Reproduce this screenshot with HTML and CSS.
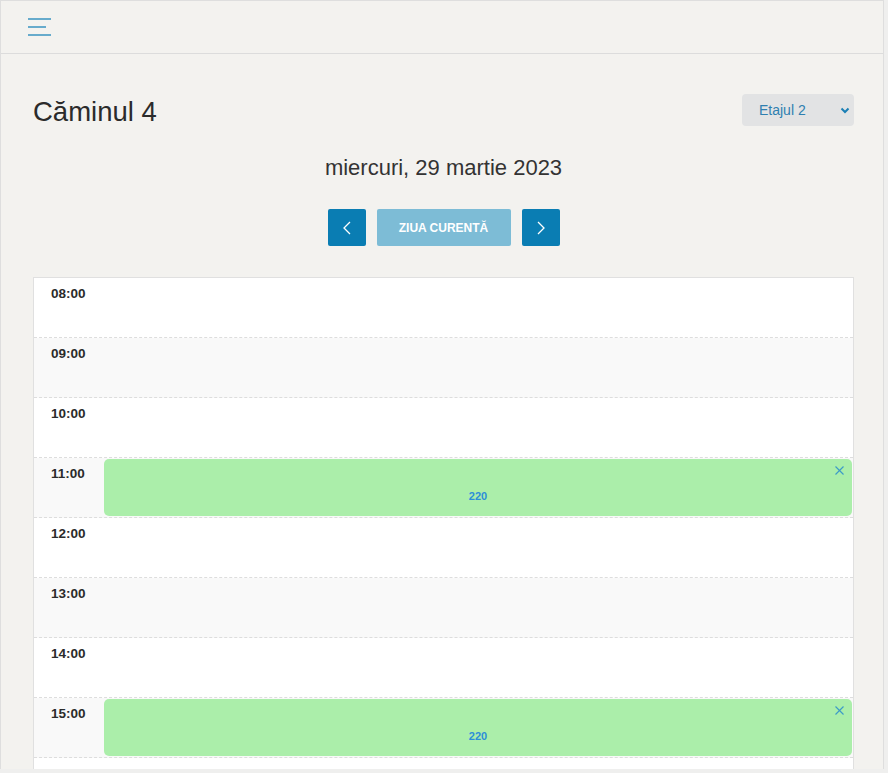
FILE: index.html
```html
<!DOCTYPE html>
<html lang="ro">
<head>
    <meta charset="UTF-8">
    <meta name="viewport" content="width=device-width, initial-scale=1.0">
    <title>Căminul 4</title>
    <link rel="stylesheet" href="styles.css">
</head>
<body>
    <div class="app">
        <header class="topbar">
            <button class="menu-btn" aria-label="Meniu">
                <svg width="24" height="18" viewBox="0 0 24 18">
                    <line x1="0" y1="1" x2="23" y2="1" />
                    <line x1="0" y1="9" x2="18" y2="9" />
                    <line x1="0" y1="17" x2="23" y2="17" />
                </svg>
            </button>
        </header>

        <main class="page">
            <div class="title-row">
                <h1>Căminul 4</h1>
                <div class="floor-select">
                    <span>Etajul 2</span>
                    <svg width="10" height="7" viewBox="0 0 10 7">
                        <polyline points="1.5,1.5 5,5 8.5,1.5" />
                    </svg>
                </div>
            </div>

            <div class="date">miercuri, 29 martie 2023</div>

            <div class="nav">
                <button class="btn btn-arrow" aria-label="Ziua anterioară">
                    <svg width="8" height="14" viewBox="0 0 8 14">
                        <polyline points="7,1 1,7 7,13" />
                    </svg>
                </button>
                <button class="btn btn-today">ZIUA CURENTĂ</button>
                <button class="btn btn-arrow" aria-label="Ziua următoare">
                    <svg width="8" height="14" viewBox="0 0 8 14">
                        <polyline points="1,1 7,7 1,13" />
                    </svg>
                </button>
            </div>

            <div class="calendar">
                <div class="row"><div class="time">08:00</div><div class="slot"></div></div>
                <div class="row"><div class="time">09:00</div><div class="slot"></div></div>
                <div class="row"><div class="time">10:00</div><div class="slot"></div></div>
                <div class="row">
                    <div class="time">11:00</div>
                    <div class="slot">
                        <div class="event">
                            <span class="event-close">
                                <svg width="9" height="9" viewBox="0 0 9 9">
                                    <line x1="0.5" y1="0.5" x2="8.5" y2="8.5" />
                                    <line x1="8.5" y1="0.5" x2="0.5" y2="8.5" />
                                </svg>
                            </span>
                            <span class="event-room">220</span>
                        </div>
                    </div>
                </div>
                <div class="row"><div class="time">12:00</div><div class="slot"></div></div>
                <div class="row"><div class="time">13:00</div><div class="slot"></div></div>
                <div class="row"><div class="time">14:00</div><div class="slot"></div></div>
                <div class="row">
                    <div class="time">15:00</div>
                    <div class="slot">
                        <div class="event">
                            <span class="event-close">
                                <svg width="9" height="9" viewBox="0 0 9 9">
                                    <line x1="0.5" y1="0.5" x2="8.5" y2="8.5" />
                                    <line x1="8.5" y1="0.5" x2="0.5" y2="8.5" />
                                </svg>
                            </span>
                            <span class="event-room">220</span>
                        </div>
                    </div>
                </div>
                <div class="row"><div class="time">16:00</div><div class="slot"></div></div>
                <div class="row"><div class="time">17:00</div><div class="slot"></div></div>
            </div>
        </main>
    </div>
</body>
</html>
```

FILE: styles.css
```css
body {
    margin: 0;
    font-family: "Liberation Sans", Arial, sans-serif;
    background-color: #efefee;
    color: #333;
}
.app {
    width: 882px;
    height: 768px;
    overflow: hidden;
    background-color: #f3f2ef;
    border: 1px solid #dedede;
    border-bottom: none;
}
.topbar {
    height: 52px;
    border-bottom: 1px solid #dcdcdc;
    display: flex;
    align-items: center;
    padding-left: 27px;
}
.menu-btn {
    border: none;
    background: none;
    padding: 0;
    display: flex;
    cursor: pointer;
}
.menu-btn line {
    stroke: #2a8dbd;
    stroke-width: 1.4;
}
.page {
    padding: 40px 29px 0 32px;
}
.title-row {
    display: flex;
    justify-content: space-between;
    align-items: center;
    height: 32px;
}
h1 {
    margin: 0;
    font-size: 27.5px;
    font-weight: normal;
    color: #2b2b2b;
    padding-top: 3px;
}
.floor-select {
    width: 112px;
    height: 32px;
    box-sizing: border-box;
    background-color: #e2e3e4;
    border-radius: 4px;
    display: flex;
    align-items: center;
    justify-content: space-between;
    padding: 0 4px 0 17px;
    color: #2f7fb0;
    font-size: 14px;
}
.floor-select polyline {
    fill: none;
    stroke: #1a7fb5;
    stroke-width: 2;
}
.date {
    margin-top: 29px;
    text-align: center;
    font-size: 22px;
    line-height: 26px;
    color: #333;
}
.nav {
    margin-top: 28px;
    display: flex;
    justify-content: center;
    gap: 11px;
}
.btn {
    height: 37px;
    border: none;
    border-radius: 2px;
    color: white;
    cursor: pointer;
    display: flex;
    align-items: center;
    justify-content: center;
}
.btn-arrow {
    width: 38px;
    background-color: #0a7db3;
}
.btn-arrow polyline {
    fill: none;
    stroke: white;
    stroke-width: 1.3;
}
.btn-today {
    width: 134px;
    background-color: #7dbcd6;
    font-family: "Liberation Sans", Arial, sans-serif;
    font-size: 12px;
    font-weight: bold;
}
.calendar {
    margin-top: 31px;
    border: 1px solid #e0e0e0;
    border-bottom: none;
    background-color: white;
}
.row {
    display: flex;
    height: 60px;
    box-sizing: border-box;
    border-bottom: 1px dashed #dddddd;
}
.row:nth-child(even) {
    background-color: #f9f9f9;
}
.time {
    width: 70px;
    flex-shrink: 0;
    padding: 8px 0 0 17px;
    box-sizing: border-box;
    font-size: 13.5px;
    font-weight: bold;
    color: #2b2b2b;
}
.slot {
    flex: 1;
    padding: 1px 1px 1px 0;
    display: flex;
}
.event {
    flex: 1;
    position: relative;
    background-color: #abeeaa;
    border-radius: 5px;
    text-align: center;
}
.event-room {
    display: block;
    padding-top: 31px;
    font-size: 11px;
    font-weight: bold;
    color: #2c8fd8;
}
.event-close {
    position: absolute;
    top: 7px;
    right: 8px;
    display: flex;
}
.event-close line {
    stroke: #3b9ac8;
    stroke-width: 1.1;
}
```
